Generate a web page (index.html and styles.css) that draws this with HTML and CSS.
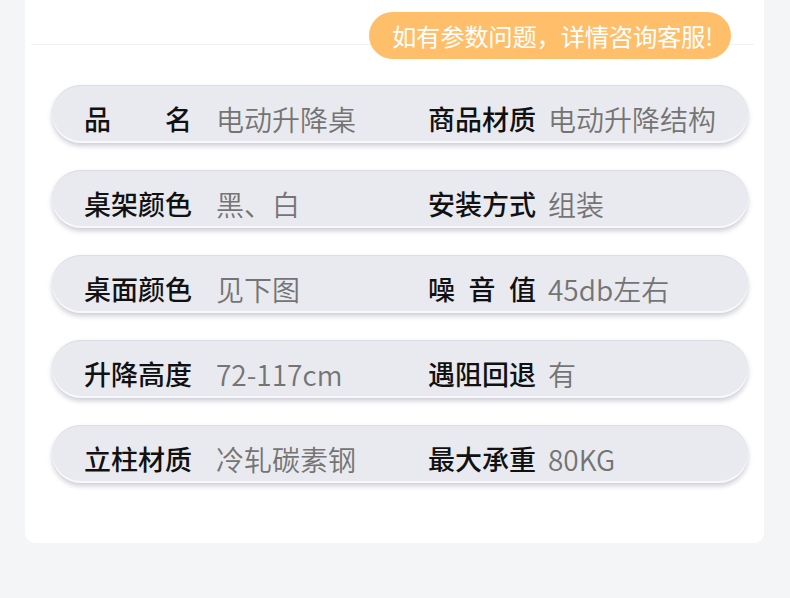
FILE: index.html
```html
<!DOCTYPE html>
<html lang="zh-CN">
<head>
<meta charset="utf-8">
<title>参数</title>
<link rel="stylesheet" href="styles.css">
</head>
<body>
<div class="card">
  <div class="top">
    <div class="notice">如有参数问题，详情咨询客服!</div>
  </div>
  <div class="rows">
    <div class="row">
      <span class="label">品名</span><span class="value v1">电动升降桌</span>
      <span class="label">商品材质</span><span class="value v2">电动升降结构</span>
    </div>
    <div class="row">
      <span class="label">桌架颜色</span><span class="value v1">黑、白</span>
      <span class="label">安装方式</span><span class="value v2">组装</span>
    </div>
    <div class="row">
      <span class="label">桌面颜色</span><span class="value v1">见下图</span>
      <span class="label">噪音值</span><span class="value v2">45db左右</span>
    </div>
    <div class="row">
      <span class="label">升降高度</span><span class="value v1">72-117cm</span>
      <span class="label">遇阻回退</span><span class="value v2">有</span>
    </div>
    <div class="row">
      <span class="label">立柱材质</span><span class="value v1">冷轧碳素钢</span>
      <span class="label">最大承重</span><span class="value v2">80KG</span>
    </div>
  </div>
</div>
</body>
</html>
```
FILE: styles.css
```css
html, body {
  margin: 0;
  padding: 0;
}
body {
  background: #f4f5f7;
  font-family: "Noto Sans CJK SC", "Noto Sans", sans-serif;
  width: 790px;
  height: 598px;
  overflow: hidden;
}
.card {
  margin-left: 25px;
  width: 739px;
  height: 543px;
  background: #ffffff;
  border-radius: 0 0 10px 10px;
  box-sizing: border-box;
}
.top {
  margin: 0 10px 0 6px;
  height: 45px;
  box-sizing: border-box;
  border-bottom: 1px solid #f0f1f3;
  padding-top: 12px;
  padding-right: 23px;
  display: flex;
  justify-content: flex-end;
  align-items: flex-start;
}
.notice {
  height: 47px;
  flex: none;
  width: 362px;
  box-sizing: border-box;
  padding-left: 23px;
  border-radius: 24px;
  background: #ffbe69;
  color: #ffffff;
  font-size: 24.4px;
  font-weight: 400;
  line-height: 47px;
  white-space: nowrap;
  letter-spacing: -0.3px;
}
.rows {
  padding: 40px 16px 0 27px;
  display: flex;
  flex-direction: column;
  gap: 27px;
}
.row {
  height: 58px;
  box-sizing: border-box;
  padding: 8px 0 0 32px;
  border-radius: 29px;
  background: #e9eaef;
  border-top: 1px solid #dcdce3;
  box-shadow: inset 0 -2px 0 #f8f8fb, 0 3px 5px rgba(130, 130, 155, 0.4);
  display: grid;
  grid-template-columns: 108px 236px 108px 1fr;
  align-items: center;
  line-height: 36px;
}
.label {
  color: #111111;
  font-size: 27px;
  font-weight: 500;
  text-align: justify;
  text-align-last: justify;
  white-space: nowrap;
}
.value {
  color: #747474;
  font-size: 28px;
  font-weight: 350;
  white-space: nowrap;
}
.v1 {
  padding-left: 24px;
}
.v2 {
  padding-left: 12px;
}
```
